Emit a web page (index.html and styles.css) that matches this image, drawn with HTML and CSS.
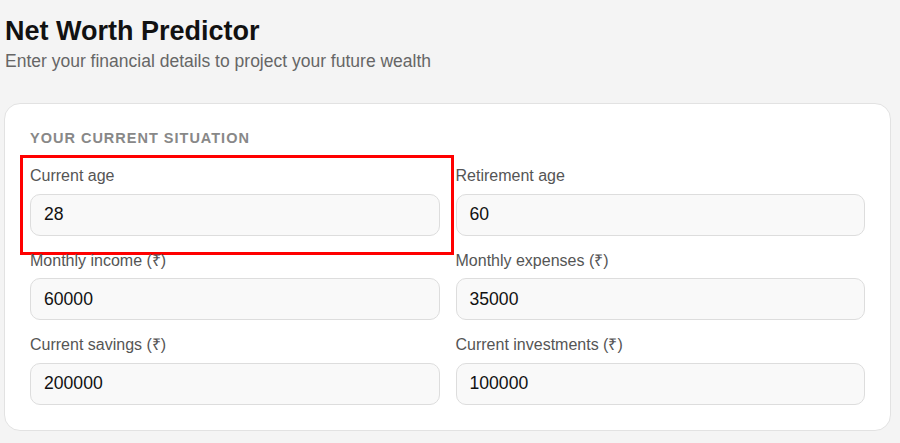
FILE: index.html
```html
<!DOCTYPE html>
<html lang="en">
<head>
<meta charset="utf-8">
<title>Net Worth Predictor</title>
<link rel="stylesheet" href="styles.css">
</head>
<body>
<div class="page">
  <header class="header">
    <h1 class="title">Net Worth Predictor</h1>
    <p class="subtitle">Enter your financial details to project your future wealth</p>
  </header>
  <section class="card">
    <h2 class="section-title">YOUR CURRENT SITUATION</h2>
    <div class="grid">
      <div class="field highlighted">
        <label class="label">Current age</label>
        <div class="input">28</div>
      </div>
      <div class="field">
        <label class="label">Retirement age</label>
        <div class="input">60</div>
      </div>
      <div class="field">
        <label class="label">Monthly income (₹)</label>
        <div class="input">60000</div>
      </div>
      <div class="field">
        <label class="label">Monthly expenses (₹)</label>
        <div class="input">35000</div>
      </div>
      <div class="field">
        <label class="label">Current savings (₹)</label>
        <div class="input">200000</div>
      </div>
      <div class="field">
        <label class="label">Current investments (₹)</label>
        <div class="input">100000</div>
      </div>
    </div>
  </section>
</div>
</body>
</html>
```

FILE: styles.css
```css
html, body {
  margin: 0;
  padding: 0;
  background: #f4f4f4;
  font-family: "Liberation Sans", Arial, sans-serif;
}
.page {
  padding: 16px 9px 0 4px;
}
.header {
  padding-left: 1px;
}
.title {
  margin: 0;
  font-size: 27px;
  line-height: 31px;
  font-weight: 700;
  color: #111;
}
.subtitle {
  margin: 4px 0 0;
  font-size: 17.5px;
  line-height: 20px;
  color: #666;
}
.card {
  margin-top: 32px;
  background: #fff;
  border: 1px solid #e2e2e2;
  border-radius: 16px;
  padding: 26px 25px 25px 25px;
}
.section-title {
  margin: 0 0 20px;
  font-size: 14.5px;
  line-height: 17px;
  font-weight: 700;
  letter-spacing: 1px;
  color: #888;
}
.grid {
  display: grid;
  grid-template-columns: 1fr 1fr;
  column-gap: 16px;
  row-gap: 16px;
}
.field {
  position: relative;
  display: flex;
  flex-direction: column;
  gap: 8px;
}
.label {
  font-size: 16px;
  line-height: 18.5px;
  color: #555;
}
.input {
  box-sizing: border-box;
  height: 42px;
  padding: 0 13px;
  display: flex;
  align-items: center;
  background: #f9f9f9;
  border: 1px solid #ddd;
  border-radius: 10px;
  font-size: 17.6px;
  color: #111;
}
.highlighted::after {
  content: "";
  position: absolute;
  top: -12px;
  left: -10px;
  right: -14px;
  bottom: -19px;
  border: 3px solid #f00;
  pointer-events: none;
}
```
